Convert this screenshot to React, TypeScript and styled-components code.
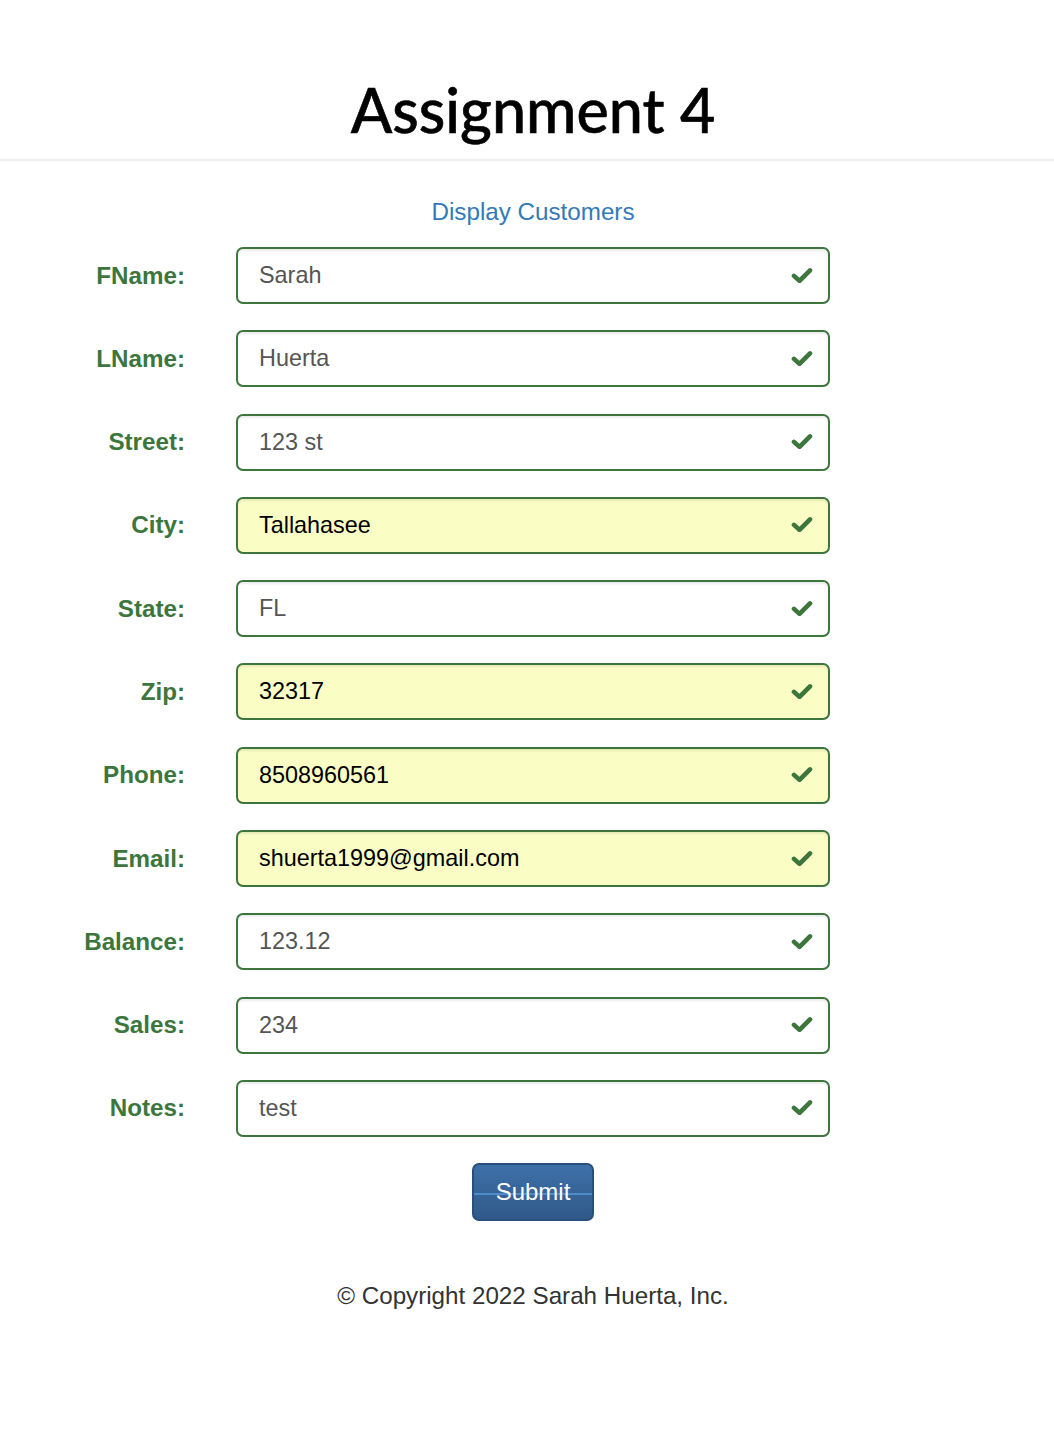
import styled, { createGlobalStyle } from "styled-components";

type Field = {
  label: string;
  value: string;
  autofilled?: boolean;
};

const fields: Field[] = [
  { label: "FName:", value: "Sarah" },
  { label: "LName:", value: "Huerta" },
  { label: "Street:", value: "123 st" },
  { label: "City:", value: "Tallahasee", autofilled: true },
  { label: "State:", value: "FL" },
  { label: "Zip:", value: "32317", autofilled: true },
  { label: "Phone:", value: "8508960561", autofilled: true },
  { label: "Email:", value: "shuerta1999@gmail.com", autofilled: true },
  { label: "Balance:", value: "123.12" },
  { label: "Sales:", value: "234" },
  { label: "Notes:", value: "test" },
];

function CheckIcon() {
  return (
    <svg width="22" height="16" viewBox="0 0 22 16">
      <path
        d="M3 8.5 L8.5 13.5 L19 3"
        fill="none"
        stroke="#3c763d"
        strokeWidth="4.6"
        strokeLinecap="round"
        strokeLinejoin="round"
      />
    </svg>
  );
}

export default function App() {
  return (
    <>
      <GlobalStyle />
      <Header>
        <Title>Assignment 4</Title>
      </Header>
      <Page>
        <NavLink href="#">Display Customers</NavLink>
        <Form onSubmit={(e) => e.preventDefault()}>
          {fields.map((f) => (
            <Row key={f.label}>
              <Label>{f.label}</Label>
              <InputWrap>
                <Input $autofilled={f.autofilled} defaultValue={f.value} />
                <Feedback>
                  <CheckIcon />
                </Feedback>
              </InputWrap>
            </Row>
          ))}
        </Form>
        <SubmitButton type="button">Submit</SubmitButton>
        <Footer>© Copyright 2022 Sarah Huerta, Inc.</Footer>
      </Page>
    </>
  );
}

/* ---------------- styles ---------------- */

const GlobalStyle = createGlobalStyle`
  html, body {
    margin: 0;
    padding: 0;
    background: #fff;
    font-family: "Liberation Sans", Arial, sans-serif;
    color: #333;
  }
`;

const Header = styled.header`
  height: 159px;
  border-bottom: 2px solid #eeeeee;
  display: flex;
  align-items: flex-start;
  justify-content: center;
  padding-left: 12px;
`;

const Title = styled.h1`
  margin: 79px 0 0;
  font-family: Lato, "Open Sans", sans-serif;
  font-weight: 500;
  font-size: 61px;
  line-height: 1;
  color: #000;
  -webkit-text-stroke: 0.6px #000;
`;

const Page = styled.main`
  padding-left: 12px;
  display: flex;
  flex-direction: column;
  align-items: center;
`;

const NavLink = styled.a`
  margin-top: 36px;
  font-size: 24.2px;
  line-height: 30px;
  color: #337ab7;
  text-decoration: none;
`;

const Form = styled.form`
  align-self: flex-start;
  margin-top: 20px;
  display: flex;
  flex-direction: column;
  gap: 26.3px;
`;

const Row = styled.div`
  display: grid;
  grid-template-columns: 173px 594px;
  column-gap: 51px;
  align-items: center;
`;

const Label = styled.label`
  text-align: right;
  font-weight: 700;
  font-size: 24.2px;
  color: #3c763d;
`;

const InputWrap = styled.div`
  position: relative;
`;

const Input = styled.input<{ $autofilled?: boolean }>`
  box-sizing: border-box;
  width: 100%;
  height: 57px;
  padding: 0 60px 0 21px;
  border: 2px solid #3c763d;
  border-radius: 7px;
  background: ${(p) => (p.$autofilled ? "#fafdc4" : "#fff")};
  color: ${(p) => (p.$autofilled ? "#000" : "#555")};
  font-family: "Liberation Sans", Arial, sans-serif;
  font-size: 23.4px;
  box-shadow: inset 0 2px 2px rgba(0, 0, 0, 0.075);
  outline: none;
`;

const Feedback = styled.span`
  position: absolute;
  right: 17px;
  top: 50%;
  transform: translateY(-54%);
  display: flex;
`;

const SubmitButton = styled.button`
  margin-top: 26px;
  width: 122px;
  height: 58px;
  border: 2px solid #28507c;
  border-radius: 7px;
  background:
    linear-gradient(to bottom, transparent 0, transparent 28px, #4f8bc9 28px, #4f8bc9 30px, transparent 30px),
    linear-gradient(to bottom, #3e70a8 0%, #30598a 100%);
  color: #fff;
  font-family: "Liberation Sans", Arial, sans-serif;
  font-size: 24px;
  cursor: pointer;
`;

const Footer = styled.footer`
  margin-top: 60px;
  font-size: 24.2px;
  line-height: 30px;
  color: #333;
`;
